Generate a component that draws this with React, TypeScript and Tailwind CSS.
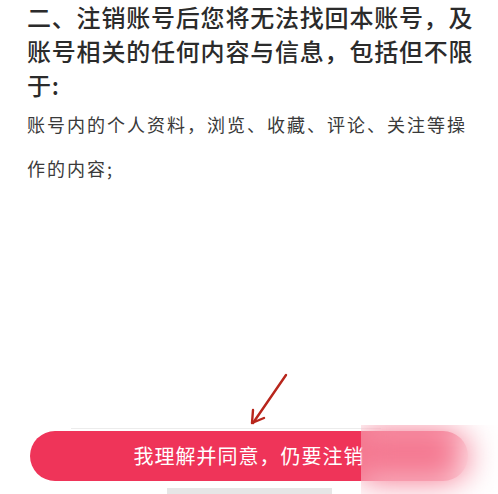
import React from 'react';

const cjk = { fontFamily: '"Noto Sans CJK SC", "Noto Sans", sans-serif' };

export default function App() {
  return (
    <div className="relative h-[494px] w-[498px] overflow-hidden bg-white" style={cjk}>
      {/* Content */}
      <div className="pl-[27px] pr-[16px]">
        <h2 className="text-[24px] font-medium leading-[34px] tracking-[0.8px] text-[#2b2b2b]">
          二、注销账号后您将无法找回本账号，及账号相关的任何内容与信息，包括但不限于:
        </h2>
        <p className="text-[18px] leading-[44px] tracking-[2px] text-[#3a3a3a]">
          账号内的个人资料，浏览、收藏、评论、关注等操作的内容;
        </p>
      </div>

      {/* Bottom action */}
      <div className="absolute inset-x-0 bottom-0 flex flex-col items-center">
        <div className="h-px w-[310px] -ml-[46px] bg-[#ececec]" />
        <div className="flex w-full px-[30px] pt-[2px]">
          <button className="flex h-[50px] flex-1 items-center justify-center rounded-full bg-[#ef3459] text-[20px] tracking-[1px] text-white">
            我理解并同意，仍要注销
          </button>
        </div>
        <div className="mt-[7px] h-[6px] w-[165px] bg-[#e6e6e6]" />
      </div>

      {/* Blurred watermark patch */}
      <div className="absolute left-[361px] top-[425px] h-[69px] w-[137px] bg-white/30 backdrop-blur-lg" />

      {/* Annotation arrow */}
      <svg className="absolute left-0 top-0" width="498" height="494" viewBox="0 0 498 494">
        <g stroke="#b8261c" strokeWidth="2.4" strokeLinecap="round" fill="none">
          <line x1="286" y1="375" x2="253" y2="423" />
          <polyline points="253,410 252,423 264,418" strokeLinejoin="round" />
        </g>
      </svg>
    </div>
  );
}
